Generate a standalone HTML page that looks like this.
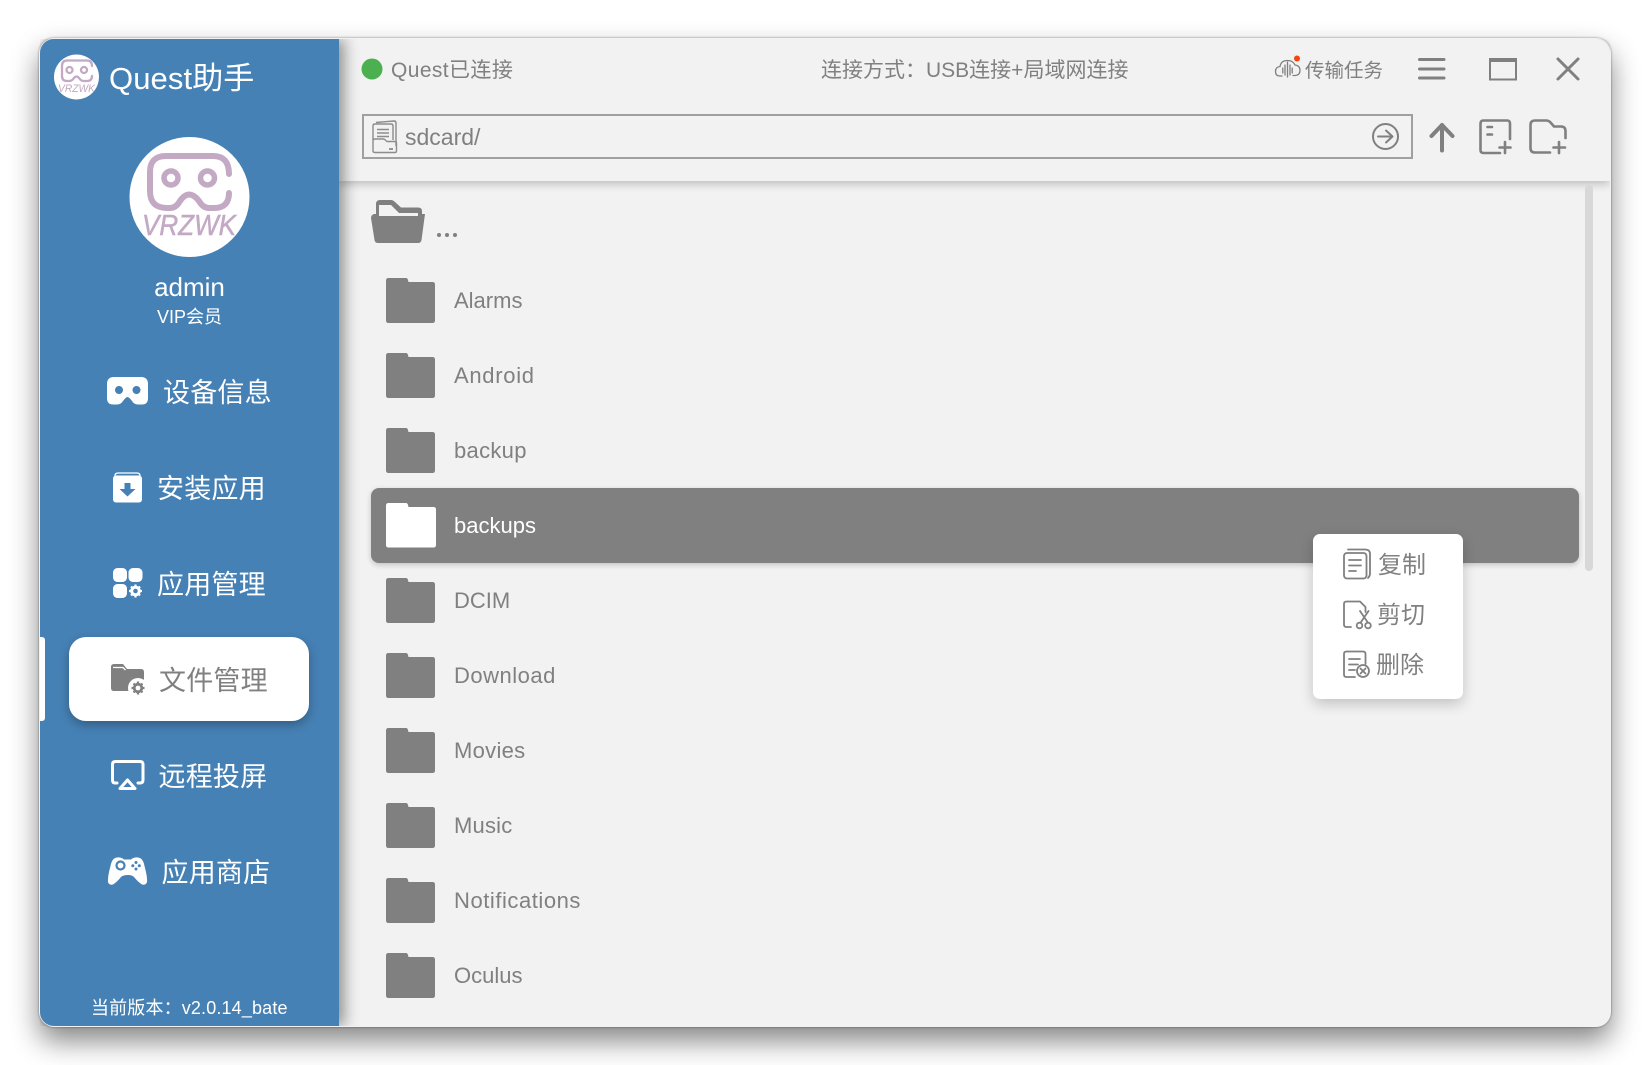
<!DOCTYPE html>
<html lang="zh-CN"><head><meta charset="utf-8"><title>Quest助手</title>
<style>
html,body{margin:0;padding:0;width:1650px;height:1065px;overflow:hidden;background:#fff}
*{box-sizing:border-box}
body{font-family:"Liberation Sans","Noto Sans CJK SC",sans-serif;position:relative}
#win{position:absolute;left:39px;top:38px;width:1572px;height:989px;border-radius:15px;background:#f2f2f2;box-shadow:0 14px 28px rgba(0,0,0,.48),0 0 2px rgba(0,0,0,.45)}
.abs{position:absolute}
#side{position:absolute;left:40px;top:39px;width:299px;height:987px;background:#4681b5;border-radius:14px 0 0 14px;box-shadow:5px 0 15px rgba(0,0,0,.42);clip-path:inset(0 -40px 0 0)}
#head{position:absolute;left:339px;top:39px;width:1271px;height:142px;background:#f2f2f2;border-radius:0 14px 0 0;box-shadow:0 3px 9px rgba(0,0,0,.22);clip-path:inset(0 0 -30px 0)}
#pill{position:absolute;left:69px;top:637px;width:240px;height:84px;background:#fff;border-radius:17px;box-shadow:0 4px 10px rgba(0,0,0,.28)}
#ind{position:absolute;left:40px;top:637px;width:5px;height:84px;background:#fff;border-radius:0 3px 3px 0}
#sel{position:absolute;left:371px;top:488px;width:1208px;height:75px;background:#808080;border-radius:8px;box-shadow:0 2px 6px rgba(0,0,0,.2)}
#bar{position:absolute;left:1585px;top:185px;width:8px;height:386px;background:#d8d8d8;border-radius:4px}
#menu{position:absolute;left:1313px;top:534px;width:150px;height:165px;background:#fff;border-radius:7px;box-shadow:0 5px 14px rgba(0,0,0,.2)}
#path{position:absolute;left:362px;top:114px;width:1051px;height:45px;border:2px solid #a0a0a0}
.t{position:absolute;white-space:nowrap;line-height:30px;height:30px;color:#808080}
.w{color:#fff}
.m{font-size:27px;color:#fff;letter-spacing:.2px}
.r{font-size:22px;left:454px}
svg{position:absolute;left:0;top:0}
</style></head><body>
<div id="win"></div>
<div id="head"></div>
<div id="side"></div>
<div id="ind"></div>
<div id="pill"></div>
<div id="sel"></div>
<div id="bar"></div>
<div id="path"></div>

<svg width="1650" height="1065" viewBox="0 0 1650 1065">
 <!-- small logo -->
 <circle cx="76.500" cy="77" r="22.500" fill="#fff"/>
 <g fill="none" stroke="#c3a9c4" stroke-width="2.300" stroke-linecap="round">
  <path d="M92 66 Q92 60.500 87 60.500 H67 Q62 60.500 62 66 V76 Q62 81 67 81 H69 Q72 81 74 78 Q76.500 75 79 78 Q81 81 84 81 H87 Q92 81 92 76"/>
  <circle cx="69.500" cy="70" r="3"/><circle cx="84" cy="70" r="3"/>
 </g>
 <text x="76.500" y="92" text-anchor="middle" font-family="Liberation Sans" font-style="italic" font-size="11" fill="#c3a9c4" textLength="37" lengthAdjust="spacingAndGlyphs">VRZWK</text>
 <!-- avatar -->
 <circle cx="189.500" cy="197" r="60" fill="#fff"/>
 <g fill="none" stroke="#c3a9c4" stroke-width="6" stroke-linecap="round">
  <path d="M229 174 Q229 156 213 156 H166 Q150 156 150 172 V191 Q150 208 167 208 H170 Q176 208 180 201 Q189 188 199 201 Q203 208 209 208 H214 Q229 208 229 193"/>
  <circle cx="171" cy="178" r="7" stroke-width="5.500"/><circle cx="207.500" cy="178" r="7" stroke-width="5.500"/>
 </g>
 <text x="189" y="235" text-anchor="middle" font-family="Liberation Sans" font-style="italic" font-size="29" fill="#c3a9c4" stroke="#c3a9c4" stroke-width=".5" textLength="94" lengthAdjust="spacingAndGlyphs">VRZWK</text>

 <!-- VR -->
 <path fill="#fff" fill-rule="evenodd" d="M113 377 H142 Q148 377.500 148 384 V398 Q148 404.500 142 404.500 H138 Q134 404.500 132 401 Q129 397 127.500 397 Q126 397 123 401 Q121 404.500 117 404.500 H113 Q107 404.500 107 398 V384 Q107 377.500 113 377Z M119 386 a4 4 0 1 0 .01 0Z M136.500 386 a4 4 0 1 0 .01 0Z"/>
 <!-- install -->
 <path fill="none" stroke="#fff" stroke-width="1.300" d="M115 476 Q115 473 118 473 H137 Q140 473 140 476"/>
 <rect x="113" y="475.500" width="29" height="27" rx="3" fill="#fff"/>
 <path fill="#4681b5" d="M124.500 483 H130.500 V489 H135.500 L127.500 496.500 L119.500 489 H124.500Z"/>
 <!-- apps -->
 <g fill="#fff">
  <rect x="113" y="568" width="14" height="14" rx="4.500"/><rect x="128.500" y="568" width="14" height="14" rx="4.500"/>
  <rect x="113" y="584" width="14" height="14" rx="4.500"/>
 </g>
 <circle cx="135.500" cy="591" r="3.800" fill="none" stroke="#fff" stroke-width="3"/>
 <path stroke="#fff" stroke-width="2.200" d="M135.500 584.500V586M135.500 596V597.500M129 591H130.500M140.500 591H142M131 586.500L132 587.500M139 594.500L140 595.500M140 586.500L139 587.500M132 594.500L131 595.500"/>
 <!-- folder gear -->
 <path fill="#808080" d="M111 667 Q111 664 114 664 H123 L127 669 H141 Q144 669 144 672 V688 Q144 691 141 691 H114 Q111 691 111 688Z"/>
 <path fill="none" stroke="#fff" stroke-width="1.300" d="M113 667.500 H123 L125.500 670"/>
 <circle cx="138" cy="688" r="10" fill="#fff"/>
 <circle cx="138" cy="688" r="3.800" fill="none" stroke="#808080" stroke-width="2.800"/>
 <path stroke="#808080" stroke-width="2.200" d="M138 681.500V683M138 693V694.500M131.500 688H133M143 688H144.500M133.500 683.500L134.500 684.500M141.500 691.500L142.500 692.500M142.500 683.500L141.500 684.500M134.500 691.500L133.500 692.500"/>
 <!-- screen -->
 <path fill="none" stroke="#fff" stroke-width="3" stroke-linecap="round" d="M117 783 H115 Q112.500 783 112.500 780 V764.500 Q112.500 761.500 115.500 761.500 H140 Q143 761.500 143 764.500 V780 Q143 783 140 783 H138"/>
 <path fill="none" stroke="#fff" stroke-width="3" stroke-linejoin="round" d="M127.500 780 L135 788.500 H120Z"/>
 <!-- gamepad -->
 <path fill="#fff" fill-rule="evenodd" d="M117 857.500 Q121 857 124 859.500 H131 Q134 857 138 857.500 Q143 858 144.500 866 Q147.500 877 147 882 Q146 885.500 142 884.500 Q138 882 134 877 Q132 875 128 875 Q123 875 121 877 Q117 882 113 884.500 Q109 885.500 108 882 Q107.500 877 110.500 866 Q112 858 117 857.500Z"/>
 <circle cx="120.500" cy="865.500" r="4" fill="none" stroke="#4681b5" stroke-width="2.200"/>
 <g fill="#4681b5"><circle cx="136" cy="862.500" r="1.500"/><circle cx="136" cy="869" r="1.500"/><circle cx="132.800" cy="865.700" r="1.500"/><circle cx="139.300" cy="865.700" r="1.500"/></g>

 <!-- dot -->
 <circle cx="372" cy="69" r="10.500" fill="#4caf50"/>
 <!-- path icon -->
 <g fill="none" stroke="#8c8c8c" stroke-width="1.400" stroke-linejoin="round">
  <path d="M376 122.500 L394 121 Q396 121 396 123 V146"/>
  <path d="M373 126 Q373 124 375 124 H391 Q393 124 393 126 V140 M373 126 V151 Q373 152.500 375 152.500 H395 Q396.500 152.500 396.500 151 V143 Q396.500 141.500 395 141.500 H387 L384 139 H375 Q373 139 373 141"/>
  <path d="M377 129.500H389M377 133H389M377 136.500H389"/>
  <path d="M389 149H393" stroke-width="1.800"/>
 </g>
 <!-- go -->
 <circle cx="1385.500" cy="136.500" r="12.500" fill="none" stroke="#808080" stroke-width="2"/>
 <path fill="none" stroke="#808080" stroke-width="2" stroke-linecap="round" stroke-linejoin="round" d="M1378 136.500H1392M1386 130.500L1392.500 136.500L1386 142.500"/>
 <!-- up -->
 <path fill="none" stroke="#808080" stroke-width="4" stroke-linecap="round" stroke-linejoin="round" d="M1442 150.500V125M1431.500 136L1442 125L1452.500 136"/>
 <!-- new file -->
 <g fill="none" stroke="#808080" stroke-width="2.600" stroke-linecap="round">
  <path d="M1500 153 H1483.500 Q1480.500 153 1480.500 150 V123.500 Q1480.500 120.500 1483.500 120.500 H1507 Q1510 120.500 1510 123.500 V139"/>
  <path d="M1487.500 127H1492M1487.500 134.500H1492"/>
  <path d="M1505 142V153M1499.500 147.500H1510.500"/>
  <path d="M1550 152.500 H1535 Q1530.500 152.500 1530.500 148 V125 Q1530.500 120.500 1535 120.500 H1546 Q1549 120.500 1551 123 L1554 126.500 H1561 Q1565.500 126.500 1565.500 131 V138"/>
  <path d="M1559 142V153M1553.500 147.500H1565"/>
 </g>
 <!-- cloud -->
 <g fill="none" stroke="#808080" stroke-width="1.300" stroke-linecap="round">
  <path d="M1282 76 H1280 Q1275.500 76 1275.500 71.500 Q1275.500 67 1280 66.500 Q1281 60.500 1287.500 60.500 Q1293 60.500 1295 65 Q1300 65.500 1300 70.500 Q1300 75 1295.500 75.500 H1293"/>
  <path d="M1285 65V75M1287.500 62V77M1290 65V75M1282.800 68V73M1292.200 68V73"/>
 </g>
 <circle cx="1297" cy="58.500" r="3" fill="#f4450f"/>
 <!-- menu -->
 <path stroke="#808080" stroke-width="3" stroke-linecap="round" d="M1419.500 59.500H1444M1419.500 69H1444M1419.500 78H1444"/>
 <!-- max -->
 <rect x="1490" y="59.500" width="26" height="20" fill="none" stroke="#808080" stroke-width="2"/>
 <rect x="1489" y="58" width="28" height="4" fill="#808080"/>
 <!-- close -->
 <path stroke="#808080" stroke-width="3" stroke-linecap="round" d="M1558 59L1578 79M1578 59L1558 79"/>

 <!-- open folder -->
 <path fill="#808080" fill-rule="evenodd" d="M376 204 Q376 200 380 200 H391 Q393 200 395 202 L401 207.500 H418 Q422 207.500 422 211 V214 H425 L421.500 240 Q421 243 418 243 H378 Q375 243 374.500 240 L371 218 Q371 215 374 214 H376Z M379 216 H418 V213 H399 L391 205 H379Z"/>
 <!-- folders -->
 <defs><path id="f" d="M386 280.500 Q386 278 388.500 278 H406 Q407.500 278 408 280 L408.500 282 H432.500 Q435 282 435 284.500 V320.500 Q435 323 432.500 323 H388.500 Q386 323 386 320.500Z"/></defs>
 <g fill="#808080">
  <use href="#f"/><use href="#f" y="75"/><use href="#f" y="150"/><use href="#f" y="300"/><use href="#f" y="375"/><use href="#f" y="450"/><use href="#f" y="525"/><use href="#f" y="600"/><use href="#f" y="675"/>
 </g>
 <g transform="translate(0,225)"><path fill="#fff" d="M386 280.500 Q386 278 388.500 278 H406 Q407.500 278 408 280 L408.500 282 H433.500 Q436 282 436 284.500 V320 Q436 322.500 433.500 322.500 H388.500 Q386 322.500 386 320Z"/></g>
 <g fill="#808080"><circle cx="439" cy="235" r="2"/><circle cx="447" cy="235" r="2"/><circle cx="455" cy="235" r="2"/></g>
</svg>

<div class="t w" style="left:109px;top:64px;font-size:31px;line-height:30px;letter-spacing:.1px">Quest助手</div>
<div class="t w" style="left:0;width:379px;text-align:center;top:272px;font-size:26px">admin</div>
<div class="t w" style="left:0;width:379px;text-align:center;top:302px;font-size:18px">VIP会员</div>

<div class="t m" style="left:163px;top:378px">设备信息</div>
<div class="t m" style="left:157px;top:474px">安装应用</div>
<div class="t m" style="left:157px;top:570px">应用管理</div>
<div class="t m" style="left:159px;top:666px;color:#808080">文件管理</div>
<div class="t m" style="left:158.500px;top:762px">远程投屏</div>
<div class="t m" style="left:161.500px;top:858px">应用商店</div>
<div class="t w" style="left:91px;top:993px;font-size:18px;letter-spacing:.15px">当前版本：v2.0.14_bate</div>

<div class="t" style="left:391px;top:56px;font-size:21px;letter-spacing:.4px">Quest已连接</div>
<div class="t" style="left:821px;top:56px;font-size:21px">连接方式：USB连接+局域网连接</div>
<div class="t" style="left:1305px;top:56px;font-size:19.500px">传输任务</div>
<div class="t" style="left:405px;top:122px;font-size:23px">sdcard/</div>

<div class="t r" style="top:286px">Alarms</div>
<div class="t r" style="top:361px;letter-spacing:.7px">Android</div>
<div class="t r" style="top:436px;letter-spacing:.3px">backup</div>
<div class="t r w" style="top:511px">backups</div>
<div class="t r" style="top:586px">DCIM</div>
<div class="t r" style="top:661px;letter-spacing:.5px">Download</div>
<div class="t r" style="top:736px;letter-spacing:.3px">Movies</div>
<div class="t r" style="top:811px;letter-spacing:.2px">Music</div>
<div class="t r" style="top:886px;letter-spacing:.55px">Notifications</div>
<div class="t r" style="top:961px">Oculus</div>

<div id="menu"></div>
<svg width="1650" height="1065" viewBox="0 0 1650 1065">
 <g fill="none" stroke="#808080" stroke-width="1.800" stroke-linecap="round" stroke-linejoin="round">
  <path d="M1348 549.500 H1365 Q1370 549.500 1370 554 V574 Q1370 576 1368 578"/>
  <rect x="1344" y="553" width="22.500" height="25.500" rx="3"/>
  <path d="M1349 560H1361M1349 565.500H1361M1349 571H1356"/>
  <path d="M1351 627 H1346.500 Q1344 627 1344 624.500 V604 Q1344 601.500 1346.500 601.500 H1360 L1365.500 607 V612"/>
  <path d="M1360 611 L1367.500 622 M1368.500 611 L1361 622"/>
  <circle cx="1359.500" cy="625.500" r="2.800"/><circle cx="1368" cy="625.500" r="2.800"/>
  <path d="M1355 677 H1346.500 Q1344 677 1344 674.500 V654 Q1344 651.500 1346.500 651.500 H1363 Q1365.500 651.500 1365.500 654 V664"/>
  <path d="M1349 659H1360M1349 664.500H1358M1349 670H1355"/>
  <circle cx="1363" cy="671" r="6"/>
  <path d="M1360.500 668.500L1365.500 673.500M1365.500 668.500L1360.500 673.500"/>
 </g>
</svg>
<div class="t" style="left:1378px;top:551px;font-size:24px">复制</div>
<div class="t" style="left:1377px;top:601px;font-size:24px">剪切</div>
<div class="t" style="left:1376px;top:651px;font-size:24px">删除</div>
</body></html>
